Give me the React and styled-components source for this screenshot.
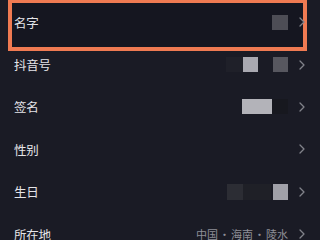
import React from "react"
import styled, { createGlobalStyle } from "styled-components"

const Global = createGlobalStyle`
  html, body {
    margin: 0;
    padding: 0;
    background: #1a1b25;
  }
  body {
    font-family: "Noto Sans CJK SC", "Noto Sans", sans-serif;
  }
`

const Screen = styled.div`
  position: relative;
  width: 320px;
  height: 240px;
  overflow: hidden;
  background: #1a1b25;
  padding-top: 1px;
  box-sizing: border-box;
`

const List = styled.ul`
  list-style: none;
  margin: 0;
  padding: 0;
`

const Row = styled.li`
  height: 42.4px;
  display: flex;
  align-items: center;
  padding: 0 15px 0 14px;
  position: relative;
  z-index: 1;
`

const Label = styled.span`
  flex: 1;
  font-size: 12.5px;
  color: #e4e4e8;
  letter-spacing: -0.2px;
`

const Value = styled.div`
  display: flex;
  align-items: center;
  margin-right: 11px;
`

const Block = styled.span`
  display: block;
  width: ${p => p.w}px;
  height: ${p => p.h || 15}px;
  background: ${p => p.c};
  filter: blur(0.4px);
`

const Place = styled.span`
  display: flex;
  align-items: center;
  font-size: 11px;
  color: #8e8f97;
`

const Dot = styled.span`
  display: inline-block;
  width: 13px;
  text-align: center;
`

const Chevron = styled.svg`
  width: 6px;
  height: 10px;
  flex: none;
`

const Highlight = styled.div`
  position: absolute;
  left: 8px;
  top: -1px;
  width: 299px;
  height: 52px;
  box-sizing: border-box;
  border: 4px solid #ef7a52;
  background: #151620;
`

const rows = [
  { label: "名字", blocks: [{ w: 16, c: "#4d4d55" }] },
  {
    label: "抖音号",
    blocks: [
      { w: 17, c: "#1f2029" },
      { w: 15, c: "#a9a9b1" },
      { w: 15, c: "transparent" },
      { w: 15, c: "#57575f" },
    ],
  },
  {
    label: "签名",
    blocks: [
      { w: 30, c: "#b3b3b9" },
      { w: 16, c: "#17181f" },
    ],
  },
  { label: "性别", blocks: [] },
  {
    label: "生日",
    blocks: [
      { w: 16, c: "#2c2d34", h: 16 },
      { w: 28, c: "#1f2027", h: 16 },
      { w: 2, c: "transparent", h: 16 },
      { w: 15, c: "#a0a0a8", h: 16 },
    ],
  },
  { label: "所在地", place: ["中国", "海南", "陵水"] },
]

const Arrow = () => (
  <Chevron viewBox="0 0 6 10">
    <polyline points="1,1 5,5 1,9" fill="none" stroke="#81828a" strokeWidth="1.3" strokeLinecap="round" strokeLinejoin="round" />
  </Chevron>
)

export default function App() {
  return (
    <Screen>
      <Global />
      <Highlight />
      <List>
        {rows.map((r, i) => (
          <Row key={i}>
            <Label>{r.label}</Label>
            <Value>
              {r.place ? (
                <Place>
                  {r.place.map((p, j) => (
                    <React.Fragment key={j}>
                      {j > 0 && <Dot>·</Dot>}
                      {p}
                    </React.Fragment>
                  ))}
                </Place>
              ) : (
                r.blocks.map((b, j) => <Block key={j} {...b} />)
              )}
            </Value>
            <Arrow />
          </Row>
        ))}
      </List>
    </Screen>
  )
}
